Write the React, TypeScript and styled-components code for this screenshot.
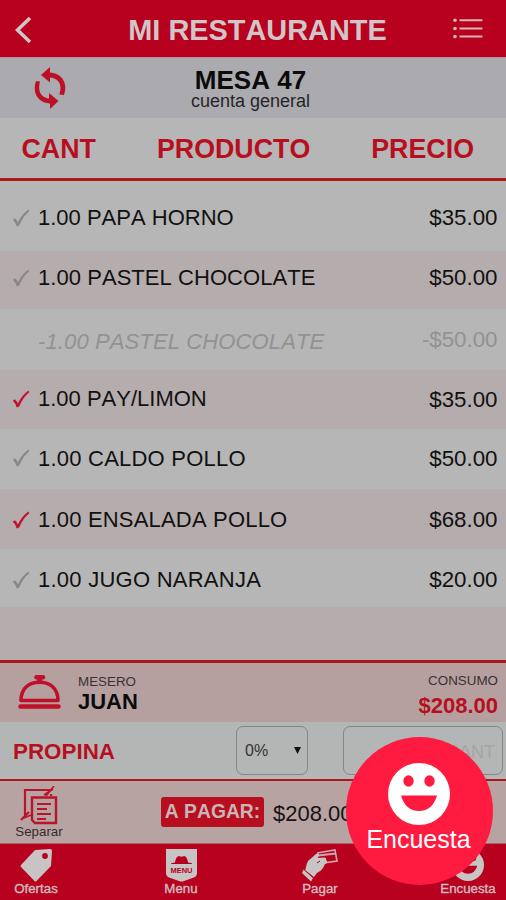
import React from "react";
import styled, { createGlobalStyle } from "styled-components";

const c = {
  red: "#b8001f",
  text: "#b80f20",
  line: "#ad1820",
  paper: "#b6b6b6",
  pink: "#b5acad",
  rose: "#b5a09f",
  light: "#c9c2c2",
};

const Global = createGlobalStyle`
  *{box-sizing:border-box}
  body{margin:0;background:${c.paper};font-family:"Liberation Sans",Arial,sans-serif;color:#0b0b0b;font-kerning:none}
  svg{display:block;flex:none}
`;

const Screen = styled.main`
  position: relative;
  width: 506px;
  height: 900px;
  overflow: hidden;
  display: flex;
  flex-direction: column;
  background: ${c.paper};
`;

const Header = styled.header`
  height: 57px;
  flex: none;
  background: ${c.red};
  color: #d0c6c7;
  display: grid;
  grid-template-columns: 60px 1fr 60px;
  align-items: center;
  padding: 2px 10px 0 14px;
`;

const Title = styled.h1`
  margin: 0;
  text-align: center;
  font-size: 28.9px;
  line-height: 32px;
  white-space: nowrap;
  padding-left: 5px;
`;

const MenuButton = styled.div`
  justify-self: end;
  padding: 0 13px 2px 0;
`;

const TableBar = styled.section`
  height: 61px;
  flex: none;
  background: #ababaf;
  display: grid;
  grid-template-columns: 66px 1fr 66px;
  align-items: center;
  border-top: 1px solid #b98f97;
`;

const SyncBox = styled.div`
  padding-left: 34px;
`;

const TableName = styled.div`
  text-align: center;
  padding: 2px 5px 0 0;
`;

const Mesa = styled.div`
  font-size: 26px;
  line-height: 24px;
  font-weight: bold;
`;

const Account = styled.div`
  font-size: 18px;
  line-height: 18px;
  color: #252528;
`;

const Columns = styled.div`
  height: 63px;
  flex: none;
  display: flex;
  align-items: center;
  border-bottom: 3px solid ${c.line};
  color: ${c.text};
  font-weight: bold;
  font-size: 26.8px;
  line-height: 30px;
  padding: 2px 32px 0 21.5px;
`;

const ColProduct = styled.span`
  margin-left: 61px;
`;

const ColPrice = styled.span`
  margin-left: auto;
`;

const Row = styled.div<{ $h: number; $pink?: boolean; $void?: boolean }>`
  height: ${(p) => p.$h}px;
  flex: none;
  display: flex;
  align-items: center;
  background: ${(p) => (p.$pink ? c.pink : c.paper)};
  color: ${(p) => (p.$void ? "#929292" : "#111")};
  padding: 0 8.5px 0 12px;
  font-size: 22.3px;
  line-height: 26px;
`;

const CheckSlot = styled.span<{ $shift: number }>`
  width: 26px;
  flex: none;
  padding-top: ${(p) => Math.max(0, p.$shift * 2)}px;
  padding-bottom: ${(p) => Math.max(0, -p.$shift * 2)}px;
`;

const Product = styled.span<{ $shift: number; $italic?: boolean; $spacing: number }>`
  flex: 1;
  font-size: 22px;
  font-style: ${(p) => (p.$italic ? "italic" : "normal")};
  letter-spacing: ${(p) => p.$spacing}px;
  padding-top: ${(p) => Math.max(0, p.$shift * 2)}px;
  padding-bottom: ${(p) => Math.max(0, -p.$shift * 2)}px;
  white-space: nowrap;
`;

const Price = styled.span<{ $shift: number }>`
  padding-top: ${(p) => Math.max(0, p.$shift * 2)}px;
  padding-bottom: ${(p) => Math.max(0, -p.$shift * 2)}px;
`;

const Filler = styled.div`
  height: 53px;
  flex: none;
  background: ${c.pink};
`;

const Waiter = styled.section`
  height: 62px;
  flex: none;
  background: ${c.rose};
  border-top: 3px solid ${c.line};
  display: flex;
  padding: 0 8px 0 18px;
`;

const BellBox = styled.div`
  padding-top: 11px;
  width: 60px;
`;

const Person = styled.div<{ $right?: boolean }>`
  margin-left: ${(p) => (p.$right ? "auto" : "0")};
  text-align: ${(p) => (p.$right ? "right" : "left")};
  padding-top: ${(p) => (p.$right ? 10 : 11)}px;
`;

const Caption = styled.div`
  font-size: 13.4px;
  line-height: 15px;
  color: #3a3032;
`;

const Name = styled.div`
  font-size: 22px;
  line-height: 25px;
  font-weight: bold;
`;

const Amount = styled(Name)`
  color: ${c.text};
  line-height: 35px;
`;

const Tip = styled.section`
  height: 57px;
  flex: none;
  display: flex;
  background: #b4b6b6;
  padding: 4px 3px 0 13px;
`;

const TipLabel = styled.div`
  width: 223px;
  color: ${c.text};
  font-weight: bold;
  font-size: 22.4px;
  line-height: 51px;
`;

const Select = styled.div`
  width: 72px;
  height: 49px;
  border: 1.5px solid #858787;
  border-radius: 7px;
  display: flex;
  justify-content: space-between;
  align-items: center;
  padding: 0 6px 0 8px;
  font-size: 16px;
  color: #333;
`;

const AmountField = styled.div`
  margin-left: 35px;
  flex: 1;
  height: 49px;
  border: 1.5px solid #858787;
  border-radius: 7px;
  text-align: right;
  font-size: 18px;
  line-height: 50px;
  padding-right: 7px;
  color: #a3a5a6;
`;

const PayBar = styled.section`
  height: 64px;
  flex: none;
  background: #b7a3a2;
  border-top: 2px solid ${c.line};
  display: flex;
  align-items: flex-start;
`;

const Split = styled.div`
  width: 78px;
  padding-top: 5px;
  display: flex;
  flex-direction: column;
  align-items: center;
  font-size: 13.3px;
  line-height: 14px;
  color: #332b2c;
`;

const PayTag = styled.div`
  margin: 16px 9px 0 83px;
  width: 103px;
  height: 30px;
  border-radius: 3px;
  background: ${c.text};
  color: #c8b6b6;
  font-weight: bold;
  font-size: 19.3px;
  line-height: 30px;
  text-align: center;
`;

const PayTotal = styled.div`
  padding-top: 20px;
  font-size: 22px;
  line-height: 25px;
  color: #171315;
`;

const Nav = styled.nav`
  height: 57px;
  flex: none;
  background: ${c.red};
  border-top: 1px solid #b3626c;
  display: grid;
  grid-template-columns: 109px 144px 134px 119px;
`;

const NavItem = styled.div<{ $dx: number }>`
  width: 72px;
  margin-left: ${(p) => p.$dx}px;
  display: flex;
  flex-direction: column;
  align-items: center;
  padding-top: 5px;
  font-size: 13.3px;
  line-height: 14px;
  color: #d0b9bc;
  -webkit-text-stroke: 0.4px #d0b9bc;
`;

const IconSlot = styled.div`
  height: 33px;
`;

const SurveyButton = styled.button`
  position: absolute;
  left: 346px;
  top: 737px;
  width: 147px;
  height: 148px;
  border: 0;
  border-radius: 50%;
  background: #ff1a3f;
  color: #fff;
  font: 25px/28px "Liberation Sans", Arial, sans-serif;
  display: flex;
  flex-direction: column;
  align-items: center;
  padding: 26px 2px 0 0;
`;

const SurveyText = styled.span`
  margin-top: 0;
`;

const Check = ({ color }: { color: string }) => (
  <svg width="18" height="18" viewBox="0 0 18 18" fill={color}>
    <path d="M.8 10.800 2.900 9.200Q5 11 6 13.500Q9.500 5.500 16.500.6L17.300 2.300Q10.800 7.500 7.200 16.600L4.700 17.500Q3.400 13 .8 10.800Z" />
  </svg>
);

const Smile = ({ size, face, hole }: { size: number; face: string; hole: string }) => (
  <svg width={size} height={size} viewBox="0 0 62 62">
    <circle cx="31" cy="31" r="31" fill={face} />
    <ellipse cx="20.500" cy="18" rx="5.200" ry="5.700" fill={hole} />
    <ellipse cx="41.500" cy="18" rx="5.200" ry="5.700" fill={hole} />
    <path d="M13 32.500H49Q44.500 48 31 48T13 32.500Z" fill={hole} />
  </svg>
);

type Item = {
  label: string;
  price: string;
  h: number;
  ls: number;
  rs: number;
  cs?: number;
  sp?: number;
  mark?: string;
  pink?: boolean;
  voided?: boolean;
};

const grey = "#898888";
const red = "#c3122b";
const items: Item[] = [
  { label: "1.00 PAPA HORNO", price: "$35.00", h: 70, ls: 2, rs: 2, cs: 2, mark: grey },
  { label: "1.00 PASTEL CHOCOLATE", price: "$50.00", h: 58, ls: -2, rs: -2, cs: -2, sp: 0.05, mark: grey, pink: true },
  { label: "-1.00 PASTEL CHOCOLATE", price: "-$50.00", h: 61, ls: 2, rs: 0, sp: 0.12, voided: true },
  { label: "1.00 PAY/LIMON", price: "$35.00", h: 59, ls: -1, rs: 0, cs: -1, mark: red, pink: true },
  { label: "1.00 CALDO POLLO", price: "$50.00", h: 60, ls: 0, rs: 0, cs: -1, sp: 0.22, mark: grey },
  { label: "1.00 ENSALADA POLLO", price: "$68.00", h: 60, ls: 1, rs: 1, cs: 1, sp: 0.19, mark: red, pink: true },
  { label: "1.00 JUGO NARANJA", price: "$20.00", h: 58, ls: 2, rs: 2, cs: 2, sp: 0.25, mark: grey },
];

export default function App() {
  return (
    <>
      <Global />
      <Screen>
        <Header>
          <svg width="20" height="28" viewBox="0 0 20 28" fill="none" stroke="#d0c6c7" strokeWidth="3.5">
            <path d="M16 2 3.500 14 16 26" />
          </svg>
          <Title>MI RESTAURANTE</Title>
          <MenuButton>
            <svg width="30" height="22" viewBox="0 0 30 22" fill="#d8b5b8">
              <path d="M6.500 1.200h23v2h-23zM6.500 9.500h23v2h-23zM6.500 17.500h23v2h-23z" />
              <circle cx="2" cy="2.300" r="1.800" />
              <circle cx="2" cy="10.500" r="1.800" />
              <circle cx="2" cy="18.600" r="1.800" />
            </svg>
          </MenuButton>
        </Header>
        <TableBar>
          <SyncBox>
            <svg width="32" height="42" viewBox="0 0 32 42" fill="#bd1027">
              <path d="M16 0V5.500C25 6 31.300 12 31.300 20.500Q31.300 24.500 30 28L25.300 27.500Q26.500 24.500 26.500 21C26.500 15 22 10.800 16 10.500V15.500L7 8Z" />
              <path d="M16 42V36.500C7 36 .7 30 .7 21.500Q.7 17.500 2 14L6 14.500Q5.200 17.500 5.200 21C5.200 27 10 31.200 15 31.500V26L24.500 34Z" />
            </svg>
          </SyncBox>
          <TableName>
            <Mesa>MESA 47</Mesa>
            <Account>cuenta general</Account>
          </TableName>
        </TableBar>
        <Columns>
          <span>CANT</span>
          <ColProduct>PRODUCTO</ColProduct>
          <ColPrice>PRECIO</ColPrice>
        </Columns>
        {items.map((it) => (
          <Row key={it.label} $h={it.h} $pink={it.pink} $void={it.voided}>
            <CheckSlot $shift={it.cs ?? 0}>{it.mark && <Check color={it.mark} />}</CheckSlot>
            <Product $shift={it.ls} $italic={it.voided} $spacing={it.sp ?? 0}>{it.label}</Product>
            <Price $shift={it.rs}>{it.price}</Price>
          </Row>
        ))}
        <Filler />
        <Waiter>
          <BellBox>
            <svg width="43" height="36" viewBox="0 0 43 36" fill="none" stroke="#be1029">
              <path d="M3 26.500C3 14 11 8.300 21.500 8.300S40 14 40 26.500Z" strokeWidth="3.600" strokeLinejoin="round" />
              <path d="M18.500 3.300h6.500" strokeWidth="4.500" strokeLinecap="round" />
              <path d="M21.700 4v4" strokeWidth="5" />
              <path d="M2.500 32.500h38" strokeWidth="4.500" strokeLinecap="round" />
            </svg>
          </BellBox>
          <Person>
            <Caption>MESERO</Caption>
            <Name>JUAN</Name>
          </Person>
          <Person $right>
            <Caption>CONSUMO</Caption>
            <Amount>$208.00</Amount>
          </Person>
        </Waiter>
        <Tip>
          <TipLabel>PROPINA</TipLabel>
          <Select>
            <span>0%</span>
            <svg width="7" height="7" viewBox="0 0 7 7">
              <path d="M0 0h7L3.500 7z" fill="#111" />
            </svg>
          </Select>
          <AmountField>CANT</AmountField>
        </Tip>
        <PayBar>
          <Split>
            <svg width="38" height="39" viewBox="0 0 38 39" fill="none" stroke="#b9142a" strokeWidth="2.200">
              <path d="M5 31V4H31M31 8V10M1 34 9 26" />
              <path d="M26 10 34 0M24 9 33 3" strokeWidth="1.700" />
              <path d="M12 11.500H36V37H15L12 34Z" strokeWidth="2.400" />
              <path d="M17 18h14M17 23h10M17 28h14M17 33h9" strokeWidth="2" />
              <path d="M4 32 11 29" strokeWidth="1.600" />
            </svg>
            Separar
          </Split>
          <PayTag>A PAGAR:</PayTag>
          <PayTotal>$208.00</PayTotal>
        </PayBar>
        <Nav>
          <NavItem $dx={0}>
            <IconSlot>
              <svg width="32" height="33" viewBox="0 0 32 33">
                <path d="M15 1 30 0Q32 0 32 2L31 17 16.500 32Q15.500 33 14.500 32L1 18Q0 17 1 16Z" fill="#c9c4c4" />
                <circle cx="25" cy="7" r="2.900" fill={c.red} />
              </svg>
            </IconSlot>
            Ofertas
          </NavItem>
          <NavItem $dx={36}>
            <IconSlot>
              <svg width="31" height="33" viewBox="0 0 31 33">
                <path d="M0 0H31V24Q31 27 28 28.500L18 32Q15.500 33 13 32L3 28.500Q0 27 0 24Z" fill="#c9c4c4" />
                <path d="M5 15Q5 13.500 9 13.500Q10 7 13 7Q15.500 8.500 18 7Q21 7 22 13.500Q26 13.500 26 15Z" fill={c.red} />
                <text x="15.500" y="24" textAnchor="middle" textLength="22" fontSize="7.500" fontWeight="bold" fill={c.red} stroke="none">MENU</text>
              </svg>
            </IconSlot>
            Menu
          </NavItem>
          <NavItem $dx={31}>
            <IconSlot>
              <svg width="38" height="33" viewBox="0 0 38 33">
                <path d="M16 4 34 1 36 12 22 14" fill="none" stroke="#cba9ae" strokeWidth="1.600" />
                <path d="M17 6.500 35 4.500" stroke="#cba9ae" strokeWidth="2" />
                <path d="M4 22 6 14Q7 11 10 9.500L15 5Q18 3 18 6L17 9 23 8.500Q26 8.500 25 11L26 12Q27 14 24 15L22 19Q19 23 16 24L13 28Z" fill="#c9c4c4" />
                <path d="M2.500 20.500 12 29 10 32.500 1 24Z" fill="#c9c4c4" />
                <path d="M3.500 21 12 28M16 14 19 12" stroke={c.red} strokeWidth="1" />
              </svg>
            </IconSlot>
            Pagar
          </NavItem>
          <NavItem $dx={45}>
            <IconSlot>
              <Smile size={32} face="#c9c4c4" hole={c.red} />
            </IconSlot>
            Encuesta
          </NavItem>
        </Nav>
        <SurveyButton>
          <Smile size={62} face="#fff" hole="#ff1a3f" />
          <SurveyText>Encuesta</SurveyText>
        </SurveyButton>
      </Screen>
    </>
  );
}
